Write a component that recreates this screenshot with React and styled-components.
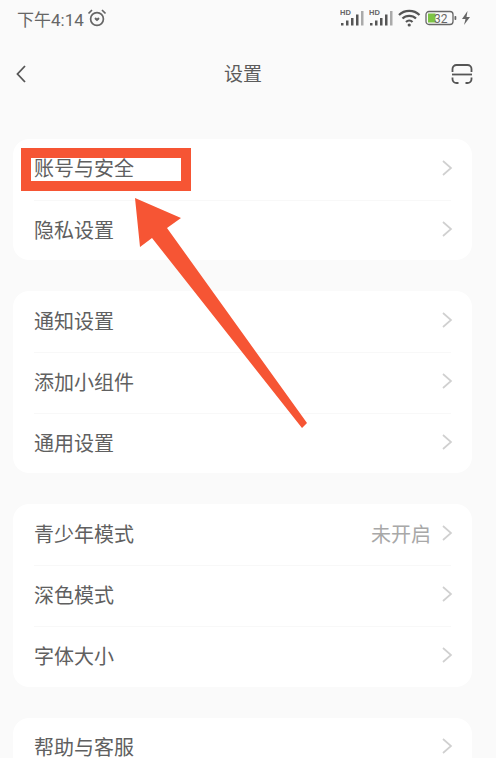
import React from "react";
import styled, { createGlobalStyle } from "styled-components";

const Global = createGlobalStyle`
  html, body { margin: 0; padding: 0; background: #fafafa; }
  body { font-family: "Liberation Sans", "Noto Sans CJK SC", sans-serif; }
`;

const Page = styled.div`
  position: relative;
  width: 496px;
  height: 758px;
  overflow: hidden;
  background: #fafafa;
  display: flex;
  flex-direction: column;
`;

const StatusBar = styled.div`
  height: 38px;
  flex-shrink: 0;
  padding: 0 25px 2px 17px;
  box-sizing: border-box;
  display: flex;
  align-items: center;
  justify-content: space-between;
  color: #666;
`;

const Clock = styled.div`
  display: flex;
  align-items: center;
  gap: 3px;
  font-family: "Roboto", "Noto Sans CJK SC", sans-serif;
  font-size: 17px;
  color: #666;
`;

const StatusIcons = styled.div`
  display: flex;
  align-items: center;
  gap: 4px;
`;

const NavBar = styled.div`
  height: 72px;
  flex-shrink: 0;
  padding: 0 23px 0 15px;
  display: flex;
  align-items: center;
  justify-content: space-between;
`;

const NavTitle = styled.div`
  font-family: "Noto Sans CJK SC", sans-serif;
  font-size: 19px;
  color: #5c5c5c;
  margin: 0 0 3px 8px;
`;

const List = styled.div`
  padding: 29px 0 0 13px;
  width: 459px;
  display: flex;
  flex-direction: column;
  gap: 31px;
  flex-shrink: 0;
`;

const Card = styled.div`
  background: #fff;
  border-radius: 16px;
  display: flex;
  flex-direction: column;
  padding: 0 21px;
  flex-shrink: 0;
`;

const Row = styled.div`
  height: 60.700px;
  box-sizing: border-box;
  padding-bottom: 3px;
  display: flex;
  align-items: center;
  justify-content: space-between;
  font-family: "Noto Sans CJK SC", sans-serif;
  font-size: 20px;
  color: #606060;
  & + & { border-top: 1px solid #f8f8f8; }
`;

const Right = styled.div`
  display: flex;
  align-items: center;
  gap: 10px;
  margin-right: -2px;
`;

const Hint = styled.span`
  font-size: 20px;
  color: #a8a8a8;
`;

const Highlight = styled.div`
  position: absolute;
  left: 21px;
  top: 148px;
  width: 150px;
  height: 23px;
  border: 10px solid #f65534;
`;

const ArrowOverlay = styled.svg`
  position: absolute;
  left: 0;
  top: 0;
  pointer-events: none;
`;

const Chevron = () => (
  <svg width="12" height="18" viewBox="0 0 12 18" fill="none">
    <path d="M2 2l8 7-8 7" stroke="#d0d0d0" strokeWidth="1.700" />
  </svg>
);

const AlarmIcon = () => (
  <svg width="20" height="20" viewBox="0 0 20 20" fill="none" stroke="#666" strokeWidth="1.700">
    <circle cx="10" cy="11" r="6.400" />
    <path d="M1.500 5.500L5 2M18.500 5.500L15 2" />
    <path d="M7.600 10.200c.6-1 1.600-.7 2.400.3.8-1 1.800-1.300 2.400-.3.4.9-1.200 2.200-2.400 3-1.200-.8-2.800-2.100-2.400-3z" fill="#666" stroke="none" />
  </svg>
);

const Signal = () => (
  <svg width="25" height="20" viewBox="0 0 25 20">
    <text x="0" y="7" fontFamily="Liberation Sans" fontWeight="700" fontSize="7.500" fill="#666">HD</text>
    <rect x="1" y="15" width="2.500" height="2.500" fill="#555" />
    <rect x="6" y="12.500" width="2.500" height="5" fill="#555" />
    <rect x="11" y="10" width="2.500" height="7.500" fill="#555" />
    <rect x="16" y="6.500" width="2.500" height="11" fill="#555" />
    <rect x="21" y="3" width="2.500" height="14.500" fill="#aaa" />
  </svg>
);

const Wifi = () => (
  <svg width="23" height="20" viewBox="0 0 23 20" fill="none" stroke="#555" strokeWidth="2.200">
    <path d="M1 7c5.500-5.500 15-5.500 20.500 0" />
    <path d="M4.500 10.500c3.500-3.500 10-3.500 13.500 0" />
    <path d="M8 14c1.800-1.800 4.700-1.800 6.500 0" />
    <circle cx="11.200" cy="17" r="1.600" fill="#555" stroke="none" />
  </svg>
);

const Battery = () => (
  <svg width="32" height="18" viewBox="0 0 32 18" fill="none">
    <rect x="1" y="2.500" width="27" height="13" rx="3" stroke="#666" strokeWidth="1.300" />
    <rect x="3" y="4.500" width="7.500" height="9" fill="#7cc444" />
    <rect x="29.500" y="7" width="1.800" height="4" rx="0.800" fill="#666" />
    <text x="9" y="14" fontFamily="Roboto" fontSize="12" fill="#666">32</text>
  </svg>
);

const Bolt = () => (
  <svg width="10" height="14" viewBox="0 0 10 14">
    <path d="M6.500 0L1 8h3.500L3 14l6-8H5.500z" fill="#666" />
  </svg>
);

const groups = [
  [["账号与安全"], ["隐私设置"]],
  [["通知设置"], ["添加小组件"], ["通用设置"]],
  [["青少年模式", "未开启"], ["深色模式"], ["字体大小"]],
  [["帮助与客服"]],
];

export default function App() {
  return (
    <Page>
      <Global />
      <StatusBar>
        <Clock>
          下午4:14
          <AlarmIcon />
        </Clock>
        <StatusIcons>
          <Signal />
          <Signal />
          <Wifi />
          <Battery />
          <Bolt />
        </StatusIcons>
      </StatusBar>
      <NavBar>
        <svg width="12" height="20" viewBox="0 0 12 20" fill="none">
          <path d="M10 2L2.500 10l7.500 8" stroke="#555" strokeWidth="1.800" />
        </svg>
        <NavTitle>设置</NavTitle>
        <svg width="22" height="22" viewBox="0 0 22 22" fill="none" stroke="#555" strokeWidth="1.800">
          <path d="M1.500 9V6a4 4 0 0 1 4-4h11a4 4 0 0 1 4 4v3" />
          <path d="M1 11.500h20" />
          <path d="M1.500 14.500V16a4 4 0 0 0 4 4h2M14.500 20h2a4 4 0 0 0 4-4v-1.500" />
        </svg>
      </NavBar>
      <List>
        {groups.map((g, i) => (
          <Card key={i}>
            {g.map(([label, hint]) => (
              <Row key={label}>
                <span>{label}</span>
                <Right>
                  {hint && <Hint>{hint}</Hint>}
                  <Chevron />
                </Right>
              </Row>
            ))}
          </Card>
        ))}
      </List>
      <Highlight />
      <ArrowOverlay width="496" height="758" viewBox="0 0 496 758">
        <polygon points="135,198 181,218 167,228 307,423 302,428 152,238 140,247" fill="#f65534" />
      </ArrowOverlay>
    </Page>
  );
}
